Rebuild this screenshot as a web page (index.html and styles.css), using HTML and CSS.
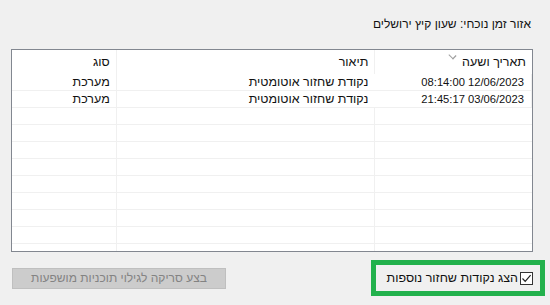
FILE: index.html
```html
<!DOCTYPE html>
<html lang="he" dir="rtl">
<head>
  <meta charset="UTF-8">
  <title>שחזור המערכת</title>
  <link rel="stylesheet" href="styles.css">
</head>
<body>
  <div class="page">
    <div class="zone">אזור זמן נוכחי: שעון קיץ ירושלים</div>

    <div class="list">
      <div class="row head">
        <div class="cell date">תאריך ושעה<span class="sort"></span></div>
        <div class="cell desc">תיאור</div>
        <div class="cell kind">סוג</div>
      </div>
      <div class="row">
        <div class="cell date time">08:14:00 12/06/2023</div>
        <div class="cell desc">נקודת שחזור אוטומטית</div>
        <div class="cell kind">מערכת</div>
      </div>
      <div class="row">
        <div class="cell date time">21:45:17 03/06/2023</div>
        <div class="cell desc">נקודת שחזור אוטומטית</div>
        <div class="cell kind">מערכת</div>
      </div>
      <div class="row"><div class="cell date"></div><div class="cell desc"></div><div class="cell kind"></div></div>
      <div class="row"><div class="cell date"></div><div class="cell desc"></div><div class="cell kind"></div></div>
      <div class="row"><div class="cell date"></div><div class="cell desc"></div><div class="cell kind"></div></div>
      <div class="row"><div class="cell date"></div><div class="cell desc"></div><div class="cell kind"></div></div>
      <div class="row"><div class="cell date"></div><div class="cell desc"></div><div class="cell kind"></div></div>
      <div class="row"><div class="cell date"></div><div class="cell desc"></div><div class="cell kind"></div></div>
      <div class="row"><div class="cell date"></div><div class="cell desc"></div><div class="cell kind"></div></div>
      <div class="row"><div class="cell date"></div><div class="cell desc"></div><div class="cell kind"></div></div>
      <div class="row"><div class="cell date"></div><div class="cell desc"></div><div class="cell kind"></div></div>
    </div>

    <div class="footer">
      <label class="more">
        <span class="check">
          <svg width="11" height="11" viewBox="0 0 11 11">
            <path d="M1.5 5.5 L4.2 8.3 L9.6 2.2" fill="none" stroke="#222" stroke-width="1.2"/>
          </svg>
        </span>
        הצג נקודות שחזור נוספות
      </label>
      <button class="btn" disabled>בצע סריקה לגילוי תוכניות מושפעות</button>
    </div>
  </div>
</body>
</html>
```

FILE: styles.css
```css
html, body {
  margin: 0;
  background: #f0f0f0;
}
body {
  font-family: "Liberation Sans", Arial, sans-serif;
  font-size: 12px;
  color: #111111;
}
.page {
  padding: 16px 17px 0 11px;
}
.zone {
  height: 16px;
  line-height: 16px;
  padding-right: 2px;
  margin-bottom: 17px;
}
.list {
  height: 201px;
  border: 1px solid #828790;
  background: #ffffff;
  overflow: hidden;
  font-size: 12.5px;
}
.row {
  display: flex;
  height: 16px;
  border-bottom: 1px solid #f0f0f0;
}
.row.head {
  height: 24px;
  border-bottom: none;
}
.cell {
  padding-right: 6px;
  line-height: 16px;
  white-space: nowrap;
  box-sizing: border-box;
}
.head .cell {
  line-height: 24px;
}
.date {
  position: relative;
  width: 158px;
  border-left: 1px solid #f0f0f0;
}
.time {
  direction: ltr;
  text-align: right;
  border-left: none;
  border-right: 1px solid #f0f0f0;
  padding-right: 7px;
  font-size: 11.2px;
}
.desc {
  width: 259px;
  border-left: 1px solid #f0f0f0;
}
.kind {
  width: 104px;
}
.sort {
  position: absolute;
  top: 3px;
  left: 75px;
  width: 4px;
  height: 4px;
  border-right: 1px solid #a0a0a0;
  border-bottom: 1px solid #a0a0a0;
  transform: rotate(45deg) scaleX(1.3);
}
.footer {
  display: flex;
  justify-content: space-between;
  align-items: center;
  margin-top: 8px;
}
.more {
  display: flex;
  align-items: center;
  gap: 2px;
  width: 174px;
  height: 36px;
  box-sizing: border-box;
  border: 5px solid #22b14c;
  margin-right: -12px;
  padding-right: 7px;
  font-size: 12.5px;
}
.check {
  display: flex;
  align-items: center;
  justify-content: center;
  width: 13px;
  height: 13px;
  box-sizing: border-box;
  border: 1px solid #333;
  background: #ffffff;
}
.btn {
  width: 214px;
  height: 21px;
  margin-left: 1px;
  padding: 0;
  font-family: inherit;
  font-size: 12px;
  color: #838383;
  background: #cccccc;
  border: 1px solid #bfbfbf;
}
```
